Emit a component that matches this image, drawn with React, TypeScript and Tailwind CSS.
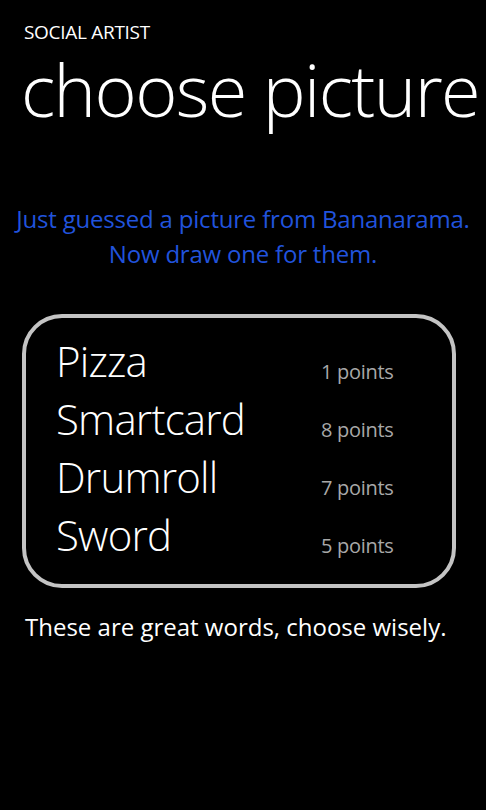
import React from "react";

const words = [
  { w: "Pizza", p: "1 points" },
  { w: "Smartcard", p: "8 points" },
  { w: "Drumroll", p: "7 points" },
  { w: "Sword", p: "5 points" },
];

export default function App() {
  return (
    <div
      className="w-[486px] h-[810px] bg-black text-white overflow-hidden"
      style={{ fontFamily: '"Open Sans", "Noto Sans", sans-serif' }}
    >
      <div className="pl-[24px] pt-[19px] text-[19px] leading-[26px] tracking-[-0.3px]">SOCIAL ARTIST</div>
      <div className="pl-[21px] mt-[10px] text-[72px] leading-[68px] font-light tracking-[-1.6px] whitespace-nowrap">
        choose picture
      </div>
      <div className="mt-[78px] text-center text-[24px] leading-[35px] text-[#2153dc] tracking-[-0.2px] whitespace-nowrap">
        <div>Just guessed a picture from Bananarama.</div>
        <div>Now draw one for them.</div>
      </div>
      <div className="mx-[22px] mt-[43px] w-[434px] h-[274px] border-[4px] border-[#c4c4c4] rounded-[40px] pl-[30px] pt-[14px]">
        {words.map((x) => (
          <div key={x.w} className="flex items-baseline h-[58px]">
            <div className="w-[265px] text-[42px] leading-[58px] font-light tracking-[-0.8px]">{x.w}</div>
            <div className="text-[20px] text-[#a8a8a8] relative top-[2px] tracking-[-0.3px]">{x.p}</div>
          </div>
        ))}
      </div>
      <div className="pl-[25px] mt-[22px] text-[24px] leading-[34px] tracking-[0px] whitespace-nowrap">
        These are great words, choose wisely.
      </div>
    </div>
  );
}
